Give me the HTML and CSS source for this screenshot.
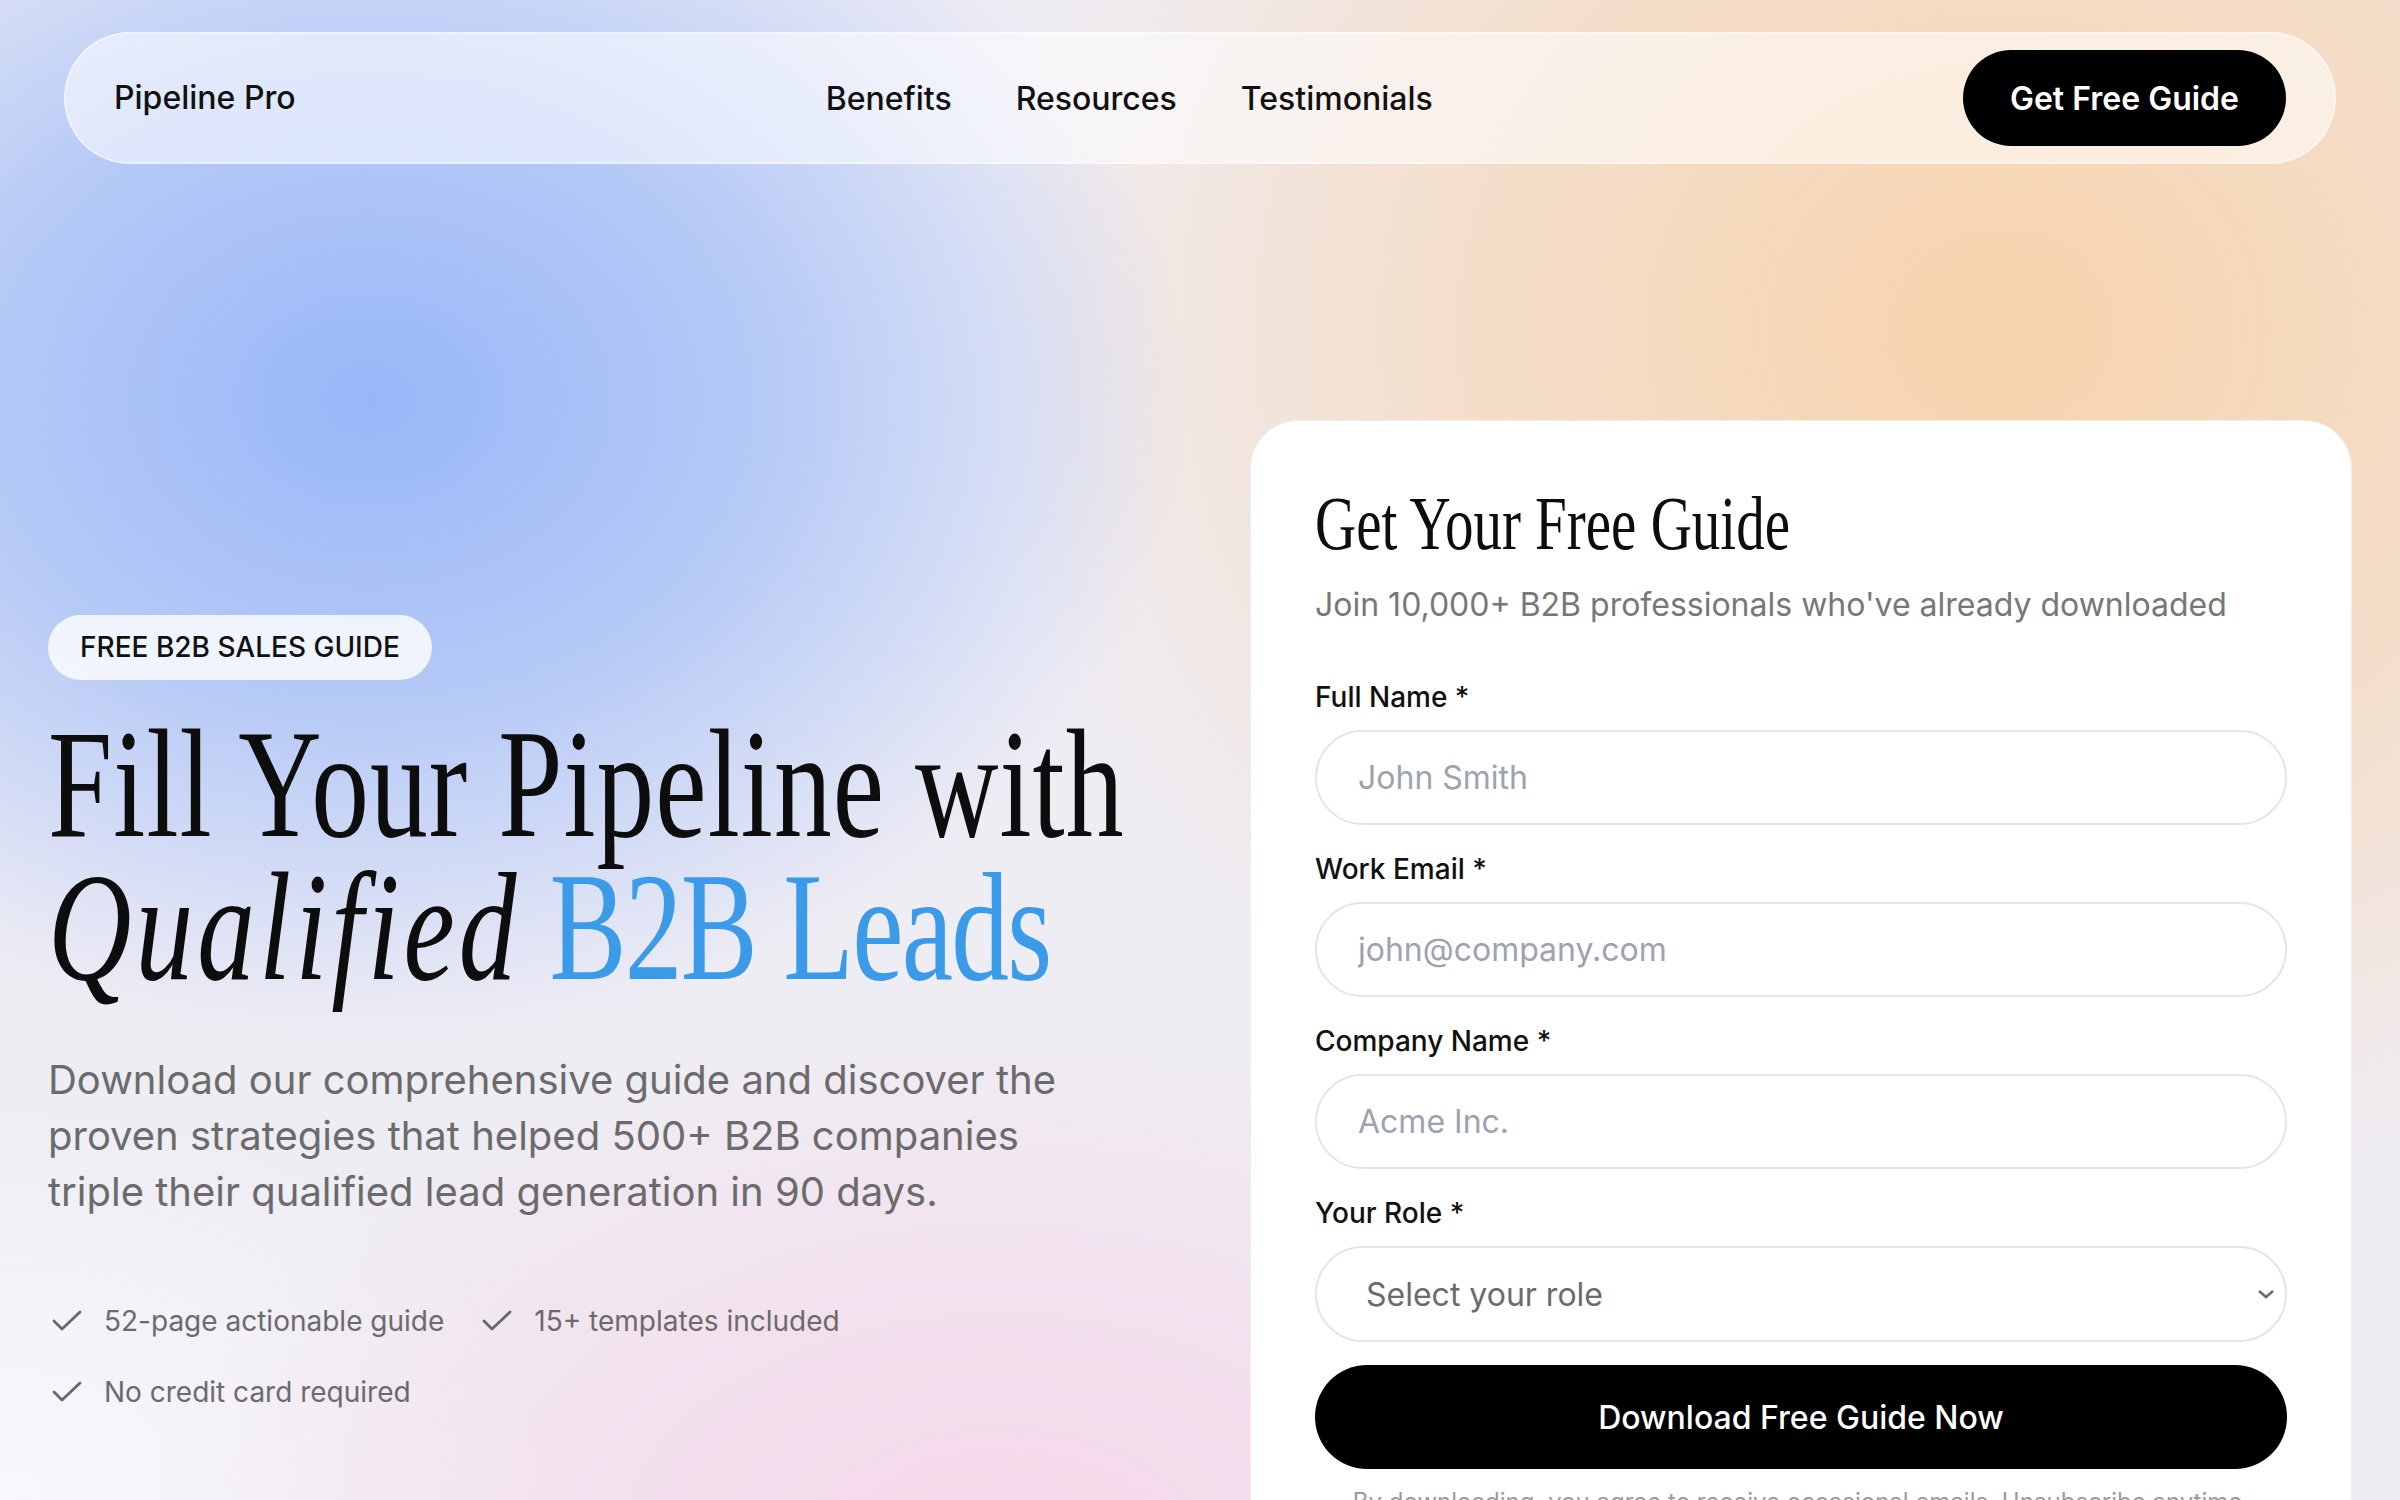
FILE: index.html
```html
<!DOCTYPE html>
<html lang="en">
<head>
<meta charset="utf-8">
<title>Pipeline Pro — Free B2B Sales Guide</title>
<link rel="stylesheet" href="styles.css">
</head>
<body>
<header class="nav">
  <div class="brand">Pipeline Pro</div>
  <nav class="links">
    <a href="#benefits">Benefits</a>
    <a href="#resources">Resources</a>
    <a href="#testimonials">Testimonials</a>
  </nav>
  <a class="nav-cta" href="#guide">Get Free Guide</a>
</header>

<main class="hero">
  <section class="intro">
    <span class="badge">FREE B2B SALES GUIDE</span>
    <h1 class="headline"><span class="line-one">Fill Your Pipeline with</span><br><em>Qualified</em> <span class="accent">B2B Leads</span></h1>
    <p class="lead">Download our comprehensive guide and discover the proven strategies that helped 500+ B2B companies triple their qualified lead generation in 90 days.</p>
    <ul class="perks">
      <li><svg class="check" viewBox="0 0 30 22"><polyline points="2,11 10,19 28,2"/></svg>52-page actionable guide</li>
      <li><svg class="check" viewBox="0 0 30 22"><polyline points="2,11 10,19 28,2"/></svg>15+ templates included</li>
      <li><svg class="check" viewBox="0 0 30 22"><polyline points="2,11 10,19 28,2"/></svg>No credit card required</li>
    </ul>
  </section>

  <section class="card" id="guide">
    <h2 class="card-title">Get Your Free Guide</h2>
    <p class="card-sub">Join 10,000+ B2B professionals who've already downloaded</p>
    <form class="form">
      <div class="field">
        <label for="name">Full Name *</label>
        <input id="name" type="text" placeholder="John Smith">
      </div>
      <div class="field">
        <label for="email">Work Email *</label>
        <input id="email" type="email" placeholder="john@company.com">
      </div>
      <div class="field">
        <label for="company">Company Name *</label>
        <input id="company" type="text" placeholder="Acme Inc.">
      </div>
      <div class="field">
        <label for="role">Your Role *</label>
        <div class="select-wrap">
          <select id="role">
            <option>Select your role</option>
            <option>Founder / CEO</option>
            <option>Sales Leader</option>
            <option>Marketing Leader</option>
            <option>Sales Rep</option>
          </select>
          <svg class="chevron" viewBox="0 0 18 10"><polyline points="2,2 9,8 16,2"/></svg>
        </div>
      </div>
      <button class="submit" type="button">Download Free Guide Now</button>
      <p class="fine">By downloading, you agree to receive occasional emails. Unsubscribe anytime.</p>
    </form>
  </section>
</main>
</body>
</html>
```

FILE: styles.css
```css
* { box-sizing: border-box; }

html, body {
  margin: 0;
  padding: 0;
}

body {
  min-height: 100vh;
  font-family: Inter, "Noto Sans", "Liberation Sans", sans-serif;
  color: #111;
  background:
    radial-gradient(ellipse 1050px 820px at 370px 400px, rgba(152,183,248,1) 0%, rgba(152,183,248,0.65) 38%, rgba(152,183,248,0) 78%),
    radial-gradient(ellipse 1250px 1100px at 2000px 330px, rgba(247,211,172,1) 0%, rgba(247,211,172,0.55) 45%, rgba(247,211,172,0) 82%),
    radial-gradient(ellipse 1100px 700px at 1000px 1560px, rgba(246,214,232,1) 0%, rgba(246,214,232,0) 78%),
    radial-gradient(ellipse 700px 500px at 0px 1500px, rgba(248,248,252,1) 0%, rgba(248,248,252,0) 80%),
    #efedf4;
  overflow: hidden;
}

/* ---------- nav ---------- */
.nav {
  margin: 32px 64px 0;
  padding: 16px 48px;
  display: flex;
  align-items: center;
  justify-content: space-between;
  background: rgba(255,255,255,0.55);
  border: 2px solid rgba(255,255,255,0.4);
  border-radius: 999px;
}

.brand {
  font-size: 32px;
  font-weight: 500;
  line-height: 1;
}

.links {
  display: flex;
  gap: 64px;
}

.links a {
  font-size: 32px;
  font-weight: 500;
  color: #111;
  text-decoration: none;
}

.nav-cta {
  height: 96px;
  padding: 0 47px;
  display: flex;
  align-items: center;
  background: #000;
  color: #fff;
  font-size: 32px;
  font-weight: 600;
  text-decoration: none;
  border-radius: 999px;
}

/* ---------- hero ---------- */
.hero {
  margin-top: 256px;
  padding: 0 48px;
  display: grid;
  grid-template-columns: minmax(0, 1fr) minmax(0, 1fr);
  column-gap: 100px;
  align-items: center;
}

.intro {
  min-width: 0;
  padding-top: 24px;
  display: flex;
  flex-direction: column;
  align-items: flex-start;
}

.badge {
  padding: 12px 32px;
  font-size: 28px;
  line-height: 41px;
  font-weight: 500;
  background: rgba(255,255,255,0.8);
  border-radius: 999px;
  color: #111;
}

.headline {
  margin: 33px 0 0;
  font-family: "Liberation Serif", "Times New Roman", serif;
  font-weight: 400;
  font-size: 154px;
  line-height: 143px;
  white-space: nowrap;
  color: #0d0d0d;
  transform: scaleX(0.75);
  transform-origin: left center;
}

.headline .line-one {
  letter-spacing: 0.009em;
}

.headline em {
  font-style: italic;
  letter-spacing: 0.035em;
}

.headline .accent {
  color: #3b9be9;
  letter-spacing: -0.015em;
}

.lead {
  margin: 53px 0 0;
  max-width: 1070px;
  font-size: 40px;
  line-height: 56px;
  color: #6b6b6b;
}

.perks {
  list-style: none;
  margin: 80px 0 0;
  padding: 0;
  display: flex;
  flex-wrap: wrap;
  column-gap: 34px;
  row-gap: 29px;
}

.perks li {
  display: flex;
  align-items: center;
  gap: 22px;
  font-size: 28px;
  line-height: 42px;
  color: #6b6b6b;
  padding-left: 4px;
}

.check {
  width: 30px;
  height: 22px;
  fill: none;
  stroke: #686868;
  stroke-width: 2.8;
  stroke-linecap: round;
  stroke-linejoin: round;
}

/* ---------- card ---------- */
.card {
  min-width: 0;
  background: #fff;
  border: 1px solid #eeeeee;
  border-radius: 48px;
  padding: 64px 64px 64px;
}

.card-title {
  margin: 0;
  font-family: "Liberation Serif", "Times New Roman", serif;
  font-weight: 400;
  font-size: 76px;
  line-height: 76px;
  white-space: nowrap;
  color: #0d0d0d;
  transform: scaleX(0.75);
  transform-origin: left center;
}

.card-sub {
  margin: 20px 0 0;
  font-size: 32px;
  line-height: 48px;
  color: #777;
}

.form {
  margin-top: 47px;
  display: flex;
  flex-direction: column;
  gap: 23px;
}

.field {
  display: flex;
  flex-direction: column;
  gap: 12px;
}

.field label {
  font-size: 28px;
  line-height: 42px;
  font-weight: 500;
  color: #111;
}

.field input,
.field select {
  width: 100%;
  height: 95px;
  padding: 0 41px;
  border: 2px solid #e5e5e5;
  border-radius: 999px;
  background: #fff;
  font-family: inherit;
  font-size: 32px;
  color: #111;
  outline: none;
}

.field input::placeholder {
  color: #9ca3af;
}

.select-wrap {
  position: relative;
}

.field select {
  appearance: none;
  -webkit-appearance: none;
  height: 96px;
  padding-left: 49px;
  color: #6b6b6b;
}

.chevron {
  position: absolute;
  right: 12px;
  top: 43px;
  width: 18px;
  height: 10px;
  fill: none;
  stroke: #6b6b6b;
  stroke-width: 2.6;
  pointer-events: none;
}

.submit {
  height: 104px;
  border: none;
  border-radius: 999px;
  background: #000;
  color: #fff;
  font-family: inherit;
  font-size: 32px;
  font-weight: 500;
  cursor: pointer;
}

.fine {
  margin: -6px 0 0;
  text-align: center;
  font-size: 24px;
  line-height: 32px;
  color: #9a9a9a;
}
```
